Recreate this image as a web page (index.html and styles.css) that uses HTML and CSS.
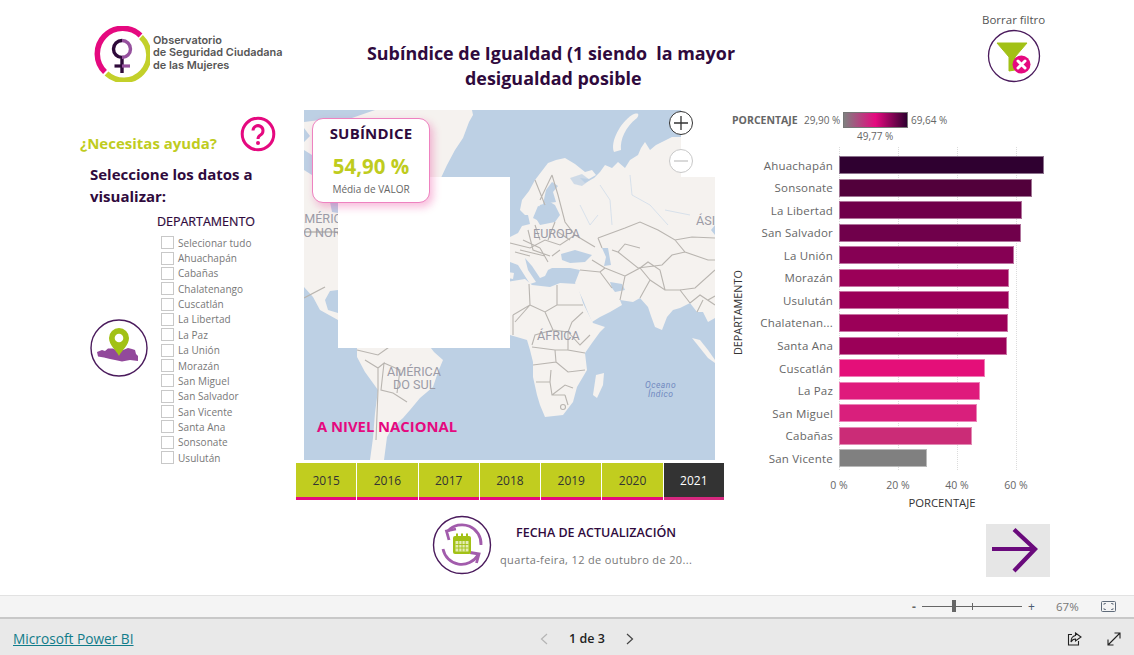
FILE: index.html
```html
<!DOCTYPE html>
<html lang="es">
<head>
<meta charset="utf-8">
<title>Subíndice de Igualdad</title>
<link rel="stylesheet" href="styles.css">
</head>
<body>
<main class="canvas">
  <header class="top">
    <div class="logo">
      <svg class="logo-mark" width="56" height="56" viewBox="0 0 56 56">
        <path d="M46.5 9.5A24.5 24.5 0 1 0 11 46" fill="none" stroke="#e5097f" stroke-width="5.5"/>
        <path d="M47 11A24.5 24.5 0 0 1 12.5 47.5" fill="none" stroke="#c3d02a" stroke-width="5.5"/>
        <path d="M28 14.5A8.5 8.5 0 0 0 28 31.5V47" fill="none" stroke="#2e0a3a" stroke-width="3.4"/>
        <path d="M28 14.5A8.5 8.5 0 0 1 28 31.5" fill="none" stroke="#96519e" stroke-width="3.4"/>
        <path d="M20.5 40H28" stroke="#2e0a3a" stroke-width="3.2"/>
        <path d="M28 40H36" stroke="#96519e" stroke-width="3.2"/>
      </svg>
      <p class="logo-text">Observatorio<br>de Seguridad Ciudadana<br>de las Mujeres</p>
    </div>
    <h1 class="title">Subíndice de Igualdad (1 siendo&nbsp; la mayor<br>&nbsp;desigualdad posible</h1>
    <div class="clear">
      <span class="clear-label">Borrar filtro</span>
      <svg width="54" height="54" viewBox="0 0 54 54">
        <circle cx="27" cy="27" r="25.5" fill="#fff" stroke="#4a1a5c" stroke-width="1.3"/>
        <path d="M10 14H40L28 28V41L22 42V28Z" fill="#a2c116" stroke="#a2c116" stroke-linejoin="round"/>
        <circle cx="34.5" cy="35.5" r="9" fill="#e5097f"/>
        <path d="M31 32L38 39M38 32L31 39" stroke="#fff" stroke-width="3" stroke-linecap="round"/>
      </svg>
    </div>
  </header>

  <section class="middle">
    <aside class="left">
      <div class="help">
        <span class="help-text">¿Necesitas ayuda?</span>
        <svg width="36" height="36" viewBox="0 0 36 36">
          <circle cx="18" cy="18" r="15.8" fill="none" stroke="#e5097f" stroke-width="3"/>
          <path d="M13 14.5A5 5 0 1 1 20.5 19C18.7 20 18 20.8 18 23" fill="none" stroke="#e5097f" stroke-width="3"/>
          <circle cx="18" cy="27" r="2" fill="#e5097f"/>
        </svg>
      </div>
      <h2 class="prompt">Seleccione los datos a visualizar:</h2>
      <div class="filter">
        <svg class="pin" width="58" height="58" viewBox="0 0 58 58">
          <circle cx="29" cy="29" r="28" fill="#fff" stroke="#4a1a5c" stroke-width="1.4"/>
          <path d="M7 33L12 31L15 32L18 29.500L23 29.500L28 32L33 31L38 29L42 30L45 31L46 35L48 37L48 42L40 41L32 42.500L25 41L20 40L14 38.500L8 37.500Z" fill="#92499b"/>
          <path d="M29 37C26 31 19 26 19 19A10 10 0 0 1 39 19C39 26 32 31 29 37Z" fill="#a2c116"/>
          <circle cx="29" cy="19" r="4.300" fill="#fff"/>
        </svg>
        <div class="slicer">
          <h3 class="slicer-title">DEPARTAMENTO</h3>
          <ul class="slicer-list">
            <li>Selecionar tudo</li><li>Ahuachapán</li><li>Cabañas</li><li>Chalatenango</li><li>Cuscatlán</li><li>La Libertad</li><li>La Paz</li><li>La Unión</li><li>Morazán</li><li>San Miguel</li><li>San Salvador</li><li>San Vicente</li><li>Santa Ana</li><li>Sonsonate</li><li>Usulután</li>
          </ul>
        </div>
      </div>
    </aside>

    <div class="center">
      <div class="map">
        <svg class="map-svg" width="411" height="350" viewBox="304 110 411 350">
          <rect x="304" y="110" width="411" height="350" fill="#bdd0e4"/>
          <g fill="#f5f2ef">
            <path d="M375 110H472L473 115L469 122L463 138L455 150L447 165L440 180H304V142L310 136L304 128V122L320 120L340 124L352 118Z"/>
            <path d="M304 205H338V290L330 291L325 300L328 310L338 313V320L320 310L313 297L304 287Z"/>
            <path d="M304 180H338V205H304Z"/>
            <path d="M357 340H425L434 352L443 360L438 372L433 387L420 398L410 410L403 418L392 428L387 437L384 460H370L373 438L375 413L378 390L365 372L357 357Z"/>
            <path d="M548 163L556 160L565 158L575 164L585 172L592 170L596 175L589 179L580 178L585 183L594 178L600 172L605 165L612 168L618 162L625 168L630 160L638 155L641 148L645 142L650 150L656 145L662 142L672 137H715V225L711 230L715 235V318L708 322L703 312L697 312L690 303L680 308L673 310L667 317L662 330L655 327L651 316L648 307L640 298L633 302L620 300L622 305L610 312L600 317L592 322L587 310L583 300L575 283L580 270L570 268L552 268L548 270L545 276L540 278L532 266L525 258L528 270L536 282L530 284L518 265L505 260V237H510L518 233L522 226L530 224L528 215L534 215L540 225L555 222L560 215L555 205L550 202L540 205L535 215L525 215L520 210L522 200L529 191L535 180Z"/>
            <path d="M500 283L525 279L532 285L550 287L560 283L577 284L583 303L588 313L593 323L605 327L600 332L592 343L585 353L587 370L577 387L573 402L563 415L545 417L540 405L537 395L533 377L533 362L530 350L527 340L510 335H500Z"/>
            <path d="M596 375L604 373L603 385L597 398L593 395Z"/>
            <path d="M692 338L700 340L708 350L715 360V363L708 358Z"/>
            <path d="M508 272L514 273L513 279L508 278Z"/>
          </g>
          <g fill="#bdd0e4">
            <path d="M543 204L546 190L552 182L558 186L553 192L556 202L549 203Z"/>
            <path d="M533 218L538 206L545 208L555 212L550 218L541 222Z"/>
            <path d="M561 254L575 250L592 255L585 262L570 263L562 260Z"/>
            <path d="M602 248L608 248L611 265L604 266L606 257Z"/>
            <path d="M615 292L625 290L622 284L610 282L612 288Z"/>
            <path d="M570 178L582 174L590 180L582 186L574 184Z" opacity=".7"/>
            <path d="M304 150L312 155V175L304 170Z"/>
            <path d="M330 202L338 200V213L332 212Z"/>
          </g>
          <path d="M632 115C638 112 640 114 637 118C625 127 620 140 621 150L614 152C610 142 620 123 632 115Z" fill="#f5f2ef"/>
          <g fill="none" stroke="#b9b5b0" stroke-width="1.100">
            <path d="M529 284L530 305L513 315M530 305L545 312L557 305V285M557 305H583M545 312L553 330L568 332L572 322L583 312M553 330L535 335L532 345M568 332L580 345L590 335M568 332V350L585 353M532 347L555 350L568 350M555 350L556 362L533 365M556 362L568 372L585 370M536 382H550L552 395L565 395M550 382L551 370M552 395L565 385L573 388M565 395L568 405M513 315V335M530 305L515 322"/>
            <circle cx="563" cy="407" r="2.500"/>
            <path d="M552 175L558 195L565 222L575 235L595 247M535 180L545 205M552 175L540 200M510 243L530 248L545 240L560 245L575 235M528 230L533 250L550 256M520 250L545 256M540 240L535 225M555 222L548 240M552 256L560 250M523 240L540 248M515 252L530 256M540 248L548 262M558 232L570 240M592 260L605 268L625 276L620 300M580 270L600 272L605 268M600 272L612 288M625 276L640 268L650 280L640 298M650 280L665 290L680 290L690 303"/>
            <path d="M598 238L625 228L640 222L658 230L675 240L692 237L715 238M675 240L685 252L708 260H715M618 252L638 268L662 265L672 255L685 252M598 238L602 248M612 250L618 252L625 244L640 248M680 290L695 288L715 270M690 303L700 295L715 305M697 312L703 300M640 268L648 262L660 270L665 290M708 300L715 296"/>
            <path d="M365 360L378 368L384 363L381 390L393 393L407 402M378 368V390L376 440M357 350L378 355L392 345M384 363L400 370L397 393M392 345V340"/>
            <path d="M304 232L338 232M304 298L325 287" stroke-width="1.400"/>
          </g>
          <g fill="none" stroke="#cfdcea" stroke-width=".8">
            <path d="M600 185L610 200L612 225M630 175L632 195L650 205L668 225M665 210L690 215M580 205L590 225L598 215"/>
          </g>
          <g class="map-label">
            <text x="296" y="223">AMÉRICA</text>
            <text x="295" y="237">DO NORTE</text>
            <text x="533" y="238">EUROPA</text>
            <text x="537" y="340">ÁFRICA</text>
            <text x="387" y="376">AMÉRICA</text>
            <text x="393" y="389">DO SUL</text>
            <text x="696" y="225">ÁSIA</text>
          </g>
          <g class="map-sea">
            <text x="645" y="388">Oceano</text>
            <text x="648" y="397">Índico</text>
          </g>
          <rect x="338" y="177" width="172" height="171" fill="#fff"/>
          <rect x="681" y="110" width="34" height="67" fill="#fff"/>
        </svg>
        <div class="kpi">
          <div class="kpi-title">SUBÍNDICE</div>
          <div class="kpi-value">54,90 %</div>
          <div class="kpi-label">Média de VALOR</div>
        </div>
        <div class="zoom-btn zoom-in"><svg width="24" height="24" viewBox="0 0 24 24"><path d="M5 12H19M12 5V19" stroke="#333" stroke-width="1.300"/></svg></div>
        <div class="zoom-btn zoom-out"><svg width="24" height="24" viewBox="0 0 24 24"><path d="M5 12H19" stroke="#c4c4c4" stroke-width="1.300"/></svg></div>
        <div class="national">A NIVEL NACIONAL</div>
      </div>
      <nav class="years">
        <span class="year">2015</span><span class="year">2016</span><span class="year">2017</span><span class="year">2018</span><span class="year">2019</span><span class="year">2020</span><span class="year year-on">2021</span>
      </nav>
    </div>

    <div class="right">
      <div class="legend">
        <b class="legend-name">PORCENTAJE</b>
        <span class="legend-min">29,90 %</span>
        <div class="legend-scale"><i class="legend-bar"></i><span class="legend-mid">49,77 %</span></div>
        <span class="legend-max">69,64 %</span>
      </div>
      <div class="chart">
        <div class="y-title">DEPARTAMENTO</div>
        <div class="plot-wrap">
          <div class="rows">
            <i class="gl gl0"></i><i class="gl gl1"></i><i class="gl gl2"></i><i class="gl gl3"></i>
            <div class="row"><span class="name">Ahuachapán</span><i class="bar" style="width:205px;background:#2f0030"></i></div>
            <div class="row"><span class="name">Sonsonate</span><i class="bar" style="width:193px;background:#52003b"></i></div>
            <div class="row"><span class="name">La Libertad</span><i class="bar" style="width:183px;background:#70004a"></i></div>
            <div class="row"><span class="name">San Salvador</span><i class="bar" style="width:182px;background:#70004b"></i></div>
            <div class="row"><span class="name">La Unión</span><i class="bar" style="width:175px;background:#860054"></i></div>
            <div class="row"><span class="name">Morazán</span><i class="bar" style="width:170px;background:#9b0058"></i></div>
            <div class="row"><span class="name">Usulután</span><i class="bar" style="width:170px;background:#9b0058"></i></div>
            <div class="row"><span class="name">Chalatenan...</span><i class="bar" style="width:169px;background:#9b0058"></i></div>
            <div class="row"><span class="name">Santa Ana</span><i class="bar" style="width:168px;background:#9b0058"></i></div>
            <div class="row"><span class="name">Cuscatlán</span><i class="bar" style="width:146px;background:#e40f79"></i></div>
            <div class="row"><span class="name">La Paz</span><i class="bar" style="width:141px;background:#df1a7c"></i></div>
            <div class="row"><span class="name">San Miguel</span><i class="bar" style="width:138px;background:#d91f7c"></i></div>
            <div class="row"><span class="name">Cabañas</span><i class="bar" style="width:133px;background:#cb2c77"></i></div>
            <div class="row"><span class="name">San Vicente</span><i class="bar" style="width:88px;background:#808080"></i></div>
          </div>
          <div class="ticks"><span>0 %</span><span>20 %</span><span>40 %</span><span>60 %</span></div>
          <div class="x-title">PORCENTAJE</div>
        </div>
      </div>
    </div>
  </section>

  <section class="bottom">
    <div class="updated">
      <svg width="60" height="60" viewBox="0 0 60 60">
        <circle cx="30" cy="30" r="28.500" fill="#fff" stroke="#4a1a5c" stroke-width="1.400"/>
        <g fill="none" stroke="#a25cac" stroke-width="2.800">
          <path d="M16 16A19 19 0 0 1 49 30"/>
          <path d="M11 34A19 19 0 0 0 46 40"/>
          <path d="M24 14L14.500 16L17 25"/>
          <path d="M38 37.500L47 39L44.500 48"/>
        </g>
        <rect x="21" y="21" width="18" height="18" rx="2" fill="#a2c116"/>
        <rect x="23.500" y="26" width="13" height="10.500" fill="#e5edb5"/>
        <path d="M23.500 29.500H36.500M23.500 33H36.500M26.800 26V36.500M30 26V36.500M33.200 26V36.500" stroke="#a2c116" stroke-width=".9"/>
        <path d="M25 18.500V22M30 18.500V22M35 18.500V22" stroke="#a2c116" stroke-width="2"/>
      </svg>
      <div class="updated-text">
        <div class="updated-title">FECHA DE ACTUALIZACIÓN</div>
        <div class="updated-date">quarta-feira, 12 de outubro de 20...</div>
      </div>
    </div>
    <div class="next">
      <svg width="64" height="53" viewBox="0 0 64 53">
        <path d="M6 25H49M28 5.500L49 25L28 47" fill="none" stroke="#6a0a7c" stroke-width="4.200"/>
      </svg>
    </div>
  </section>
</main>

<div class="zoombar">
  <span class="zb-minus">-</span>
  <div class="slider"><i class="slider-tick"></i><i class="slider-thumb"></i></div>
  <span class="zb-plus">+</span>
  <span class="zb-pct">67%</span>
  <svg width="15" height="11" viewBox="0 0 15 11"><rect x=".5" y=".5" width="14" height="10" rx="1" fill="none" stroke="#5f6b7a"/><path d="M3 4V2.500H5M10 2.500H12V4M3 7V8.500H5M10 8.500H12V7" fill="none" stroke="#5f6b7a" stroke-width=".8"/></svg>
</div>

<footer class="footer">
  <a class="pbi" href="#">Microsoft Power BI</a>
  <div class="pager">
    <svg width="8" height="12" viewBox="0 0 8 12"><path d="M7 1L1.500 6L7 11" fill="none" stroke="#b5b5b5" stroke-width="1.200"/></svg>
    <span class="pager-text">1 de 3</span>
    <svg width="8" height="12" viewBox="0 0 8 12"><path d="M1 1L6.500 6L1 11" fill="none" stroke="#444" stroke-width="1.200"/></svg>
  </div>
  <div class="foot-icons">
    <svg width="15" height="14" viewBox="0 0 15 14"><path d="M5 2.500H1.500V13H11.500V9" fill="none" stroke="#222" stroke-width="1.100"/><path d="M8.500 1L14 5L8.500 9V7C6.500 7 5 8 4 10C4 7 5.500 4 8.500 3.500Z" fill="none" stroke="#222" stroke-width="1.100"/></svg>
    <svg width="14" height="14" viewBox="0 0 14 14"><path d="M1 13L13 1M7.500 1H13V6.500M1 7.500V13H6.500" fill="none" stroke="#222" stroke-width="1.100"/></svg>
  </div>
</footer>
</body>
</html>
```

FILE: styles.css
```css
* { box-sizing: border-box; }
html, body { margin: 0; padding: 0; }
body {
  width: 1134px;
  height: 655px;
  overflow: hidden;
  background: #fff;
  font-family: "Open Sans", "Liberation Sans", sans-serif;
}
h1, h2, h3, p, ul { margin: 0; padding: 0; }
i { display: block; }

.canvas { height: 595px; display: flex; flex-direction: column; }

/* header */
.top { height: 110px; display: grid; grid-template-columns: 290px 522px 1fr; }
.logo { display: flex; align-items: flex-start; padding: 26px 0 0 94px; }
.logo-mark { flex: none; }
.logo-text {
  margin: 8px 0 0 3px;
  font-family: Inter, sans-serif;
  font-size: 10.900px;
  font-weight: 600;
  line-height: 12.300px;
  color: #565656;
  white-space: nowrap;
}
.title {
  padding: 41px 70px 0;
  font-size: 17.900px;
  font-weight: 700;
  line-height: 25px;
  color: #2f0a3d;
  text-align: center;
}
.clear { padding: 12px 0 0 170px; display: flex; flex-direction: column; align-items: flex-start; }
.clear-label { font-size: 11.500px; line-height: 16px; color: #555; margin-bottom: 1px; }
.clear svg { margin-left: 5px; }

/* main row */
.middle { height: 390px; display: grid; grid-template-columns: 296px 428px 410px; }
.help { display: flex; align-items: flex-end; padding: 6px 0 0 80px; height: 43px; }
.help-text { width: 160px; font-size: 15px; font-weight: 700; line-height: 20px; color: #bfcc1e; }
.help svg { margin-bottom: 1px; }
.prompt {
  margin-top: 10px;
  padding-left: 90px;
  width: 270px;
  font-size: 15px;
  font-weight: 700;
  line-height: 22px;
  color: #2f0a3d;
}
.filter { display: flex; padding: 6px 0 0 90px; }
.pin { flex: none; margin-top: 106px; }
.slicer { margin-left: 8px; }
.slicer-title { width: 100px; font-size: 12.500px; font-weight: 400; line-height: 17px; text-align: center; color: #2f0a3d; white-space: nowrap; -webkit-text-stroke: .2px #2f0a3d; }
.slicer-list { list-style: none; margin: 5px 0 0 5px; }
.slicer-list li {
  display: flex;
  align-items: center;
  height: 15.360px;
  font-size: 10px;
  color: #777;
  white-space: nowrap;
}
.slicer-list li::before {
  content: "";
  flex: none;
  width: 11px;
  height: 11px;
  margin-right: 5px;
  border: 1px solid #c8c8c8;
}
.slicer-list { margin-left: 5px; }
.slicer-list li::before { margin-right: 4px; }
.slicer-list li { letter-spacing: .05px; text-indent: 0; }

/* map */
.center { display: flex; flex-direction: column; }
.map { position: relative; width: 411px; height: 350px; margin-left: 8px; }
.map-svg { display: block; }
.map-label text { font-family: Roboto, sans-serif; font-size: 12.600px; fill: #9b9ba6; }
.map-sea text { font-family: Roboto, sans-serif; font-size: 8.500px; font-style: italic; fill: #7088c0; letter-spacing: .5px; }
.kpi {
  position: absolute;
  left: 8px;
  top: 8px;
  width: 118px;
  height: 85px;
  padding-top: 4px;
  background: #fff;
  border: 1px solid #ee82c0;
  border-radius: 11px;
  box-shadow: 3px 4px 9px rgba(229, 9, 127, .28);
  text-align: center;
}
.kpi-title { font-size: 15px; font-weight: 700; line-height: 20px; color: #2f0a3d; letter-spacing: .2px; }
.kpi-value { margin-top: 10px; font-size: 20.500px; font-weight: 700; line-height: 26px; color: #bfcc1e; }
.kpi-label { margin-top: 2px; font-size: 10px; line-height: 16px; color: #666; }
.zoom-btn {
  position: absolute;
  left: 365px;
  width: 24px;
  height: 24px;
  border-radius: 50%;
  background: #fff;
}
.zoom-in { top: 1px; border: 1px solid #333; }
.zoom-out { top: 39px; border: 1px solid #c8c8c8; }
.zoom-btn svg { display: block; margin: -1px; }
.national { position: absolute; left: 13px; top: 306px; font-size: 14.800px; font-weight: 700; line-height: 20px; color: #e5097f; }

.years { display: flex; gap: 1px; margin-top: 3px; height: 37px; }
.year {
  flex: 1;
  display: flex;
  align-items: center;
  justify-content: center;
  padding-top: 1px;
  background: #c1cd1f;
  border-bottom: 3px solid #e5097f;
  font-size: 12px;
  color: #333;
}
.year-on { background: #333; color: #fff; border-bottom-color: #d6287f; }

/* chart */
.right { padding-left: 8px; }
.legend { display: flex; align-items: flex-start; height: 37px; padding-top: 2px; font-size: 10px; line-height: 16px; color: #666; white-space: nowrap; }
.legend-name { width: 72px; font-size: 10.500px; }
.legend-min { width: 39px; }
.legend-scale { width: 65px; position: relative; }
.legend-bar { height: 16px; background: linear-gradient(90deg, #808080, #e5097f 50%, #2f0030); border: 1px solid #777; }
.legend-mid { position: absolute; left: 14px; top: 16px; }
.legend-max { margin-left: 3px; }
.chart { display: flex; }
.y-title {
  width: 11px;
  writing-mode: vertical-rl;
  transform: rotate(180deg);
  text-align: center;
  height: 331px;
  font-size: 10.800px;
  line-height: 11px;
  color: #333;
}
.plot-wrap { margin-left: -3px; }
.rows { position: relative; width: 305px; padding-top: 7px; height: 323px; }
.row { display: flex; align-items: center; height: 22.540px; position: relative; }
.name { flex: none; width: 93px; margin-right: 6px; text-align: right; font-size: 11.500px; color: #666; letter-spacing: .2px; white-space: nowrap; }
.bar { height: 18px; border: 1px solid rgba(255, 255, 255, .45); }
.gl { position: absolute; top: 0; bottom: 0; border-left: 1px dotted #dcdcdc; }
.gl0 { left: 99px; }
.gl1 { left: 158px; }
.gl2 { left: 217px; }
.gl3 { left: 276px; }
.ticks { display: flex; margin: 8px 0 0 69.500px; font-size: 10.500px; line-height: 14px; color: #666; }
.ticks span { width: 59px; text-align: center; }
.x-title { margin: 4px 0 0 99px; width: 206px; font-size: 11.300px; line-height: 14px; text-align: center; color: #333; }

/* bottom row */
.bottom { height: 95px; display: flex; align-items: flex-start; }
.updated { display: flex; margin: 15px 0 0 432px; }
.updated-text { margin-left: 8px; }
.updated-title { padding-left: 16px; margin-top: 10px; font-size: 12.500px; font-weight: 600; line-height: 16px; color: #2f0a3d; }
.updated-date { margin-top: 11px; font-size: 11px; line-height: 16px; color: #777; letter-spacing: .35px; white-space: nowrap; }
.next { width: 64px; height: 53px; margin: 24px 84px 0 auto; background: #e6e6e6; }
.next svg { display: block; }

/* bars */
.zoombar {
  height: 24px;
  background: #f4f4f4;
  border-top: 1px solid #e2e2e2;
  border-bottom: 2px solid #c8c8c8;
  display: flex;
  align-items: center;
  padding-left: 912px;
  color: #666;
  font-size: 12px;
}
.zb-minus { width: 10px; font-weight: 700; }
.slider { position: relative; width: 100px; height: 1px; background: #666; }
.slider-tick { position: absolute; left: 50px; top: -3px; width: 1px; height: 7px; background: #666; }
.slider-thumb { position: absolute; left: 30px; top: -6px; width: 4px; height: 12px; background: #666; }
.zb-plus { margin-left: 6px; width: 28px; color: #4a5a70; }
.zb-pct { width: 45px; font-size: 11.500px; color: #777; }
.footer {
  height: 36px;
  background: #e9e9e9;
  display: grid;
  grid-template-columns: 1fr auto 1fr;
  align-items: center;
  padding: 3px 13px 0;
}
.pbi { font-size: 13.700px; color: #117c8a; text-decoration: underline; }
.pager { display: flex; align-items: center; gap: 21px; margin-left: 40px; }
.pager-text { font-size: 12.500px; font-weight: 600; color: #222; }
.foot-icons { display: flex; justify-content: flex-end; gap: 25px; }
```
